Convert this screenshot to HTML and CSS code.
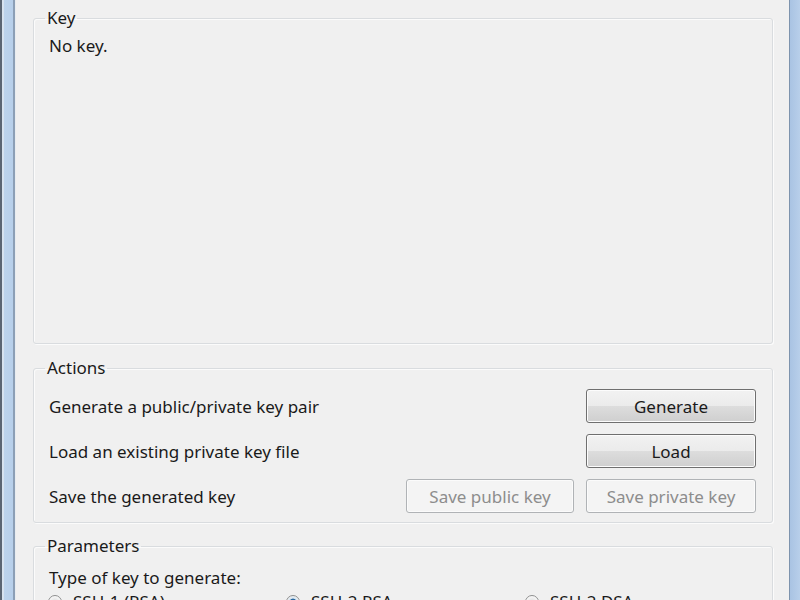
FILE: index.html
```html
<!DOCTYPE html>
<html>
<head>
<meta charset="utf-8">
<link rel="stylesheet" href="styles.css">
</head>
<body>
<div class="window">
  <div class="frame frame-left"></div>
  <div class="client">
    <fieldset class="group group-key">
      <legend>Key</legend>
      <div class="keytext">No key.</div>
    </fieldset>
    <fieldset class="group group-actions">
      <legend>Actions</legend>
      <div class="row">
        <span class="label">Generate a public/private key pair</span>
        <button class="btn">Generate</button>
      </div>
      <div class="row">
        <span class="label">Load an existing private key file</span>
        <button class="btn">Load</button>
      </div>
      <div class="row">
        <span class="label">Save the generated key</span>
        <button class="btn btn-pub" disabled>Save public key</button>
        <button class="btn" disabled>Save private key</button>
      </div>
    </fieldset>
    <fieldset class="group group-params">
      <legend>Parameters</legend>
      <div class="ptitle">Type of key to generate:</div>
      <div class="radios">
        <label class="radio"><span class="dot"></span>SSH-1 (RSA)</label>
        <label class="radio"><span class="dot on"></span>SSH-2 RSA</label>
        <label class="radio"><span class="dot"></span>SSH-2 DSA</label>
      </div>
    </fieldset>
  </div>
  <div class="frame frame-right"></div>
</div>
</body>
</html>
```
FILE: styles.css
```css
html, body {
  margin: 0;
  padding: 0;
  height: 600px;
  overflow: hidden;
}
body {
  background: #f0f0f0;
  font-family: "Noto Sans", "Open Sans", "Liberation Sans", sans-serif;
  font-size: 17px;
  color: #1a1a1a;
}
.window {
  display: flex;
  height: 600px;
  overflow: hidden;
}
.frame-left {
  width: 16px;
  flex: none;
  background: linear-gradient(to right, #5a6573 0, #5a6573 2px, #d6e2ef 2px, #d6e2ef 4px, #bcd3ec 4px, #b7cfea 13px, #8c9fb6 13px, #8c9fb6 15px, #e8ecf0 15px);
}
.frame-right {
  width: 11px;
  flex: none;
  background: linear-gradient(to right, #7d93ad 0, #7d93ad 1px, #a9c3e3 1px, #b8cfea 100%);
}
.client {
  flex: 1;
  padding: 8px 16px 0 17px;
  display: flex;
  flex-direction: column;
}
.group {
  flex: none;
  margin: 0;
  padding: 0 14px 0 14px;
  border: 1px solid #d9dcdf;
  border-radius: 3px;
  box-shadow: inset 1px 1px 0 #fbfbfb, 1px 1px 0 #fbfbfb;
}
.group legend {
  padding: 0 2px;
  margin-left: -3px;
  line-height: 20px;
}
.group-key {
  height: 336px;
  box-sizing: border-box;
}
.keytext {
  margin-top: 8px;
  margin-left: 1px;
  line-height: 20px;
}
.group-actions {
  margin-top: 14px;
  padding-top: 11px;
  padding-bottom: 9px;
  padding-right: 16px;
  display: flex;
  flex-direction: column;
  gap: 11px;
}
.row {
  display: flex;
  align-items: center;
  gap: 12px;
  height: 34px;
}
.row .label {
  flex: 1;
  margin-left: 1px;
}
.btn {
  width: 170px;
  height: 34px;
  font-family: inherit;
  font-size: 17px;
  color: #1a1a1a;
  border: 1px solid #6f6f6f;
  border-radius: 3px;
  background: linear-gradient(to bottom, #f2f2f2 0%, #ebebeb 50%, #dddddd 50%, #cfcfcf 100%);
  box-shadow: inset 0 0 0 1px #fcfcfc;
  padding: 0;
}
.btn-pub {
  width: 168px;
}
.btn:disabled {
  color: #8d8d8d;
  border-color: #b0b3b6;
  background: #f4f4f4;
  box-shadow: inset 0 0 0 1px #fbfbfb;
}
.group-params {
  margin-top: 13px;
  padding-top: 12px;
  height: 120px;
}
.ptitle {
  line-height: 20px;
  margin-left: 1px;
}
.radios {
  display: grid;
  grid-template-columns: 238px 239px 1fr;
  margin-top: 4px;
  line-height: 20px;
}
.radio {
  display: flex;
  align-items: center;
  gap: 11px;
}
.dot {
  width: 14px;
  height: 14px;
  border-radius: 50%;
  border: 1px solid #8e8f8f;
  box-sizing: border-box;
  background: radial-gradient(circle, #dcdcdc 0, #f8f8f8 70%);
}
.dot.on {
  background: radial-gradient(circle, #1d4f7a 0, #2a6aa3 35%, #d8e4ee 45%, #f4f4f4 80%);
}
```
